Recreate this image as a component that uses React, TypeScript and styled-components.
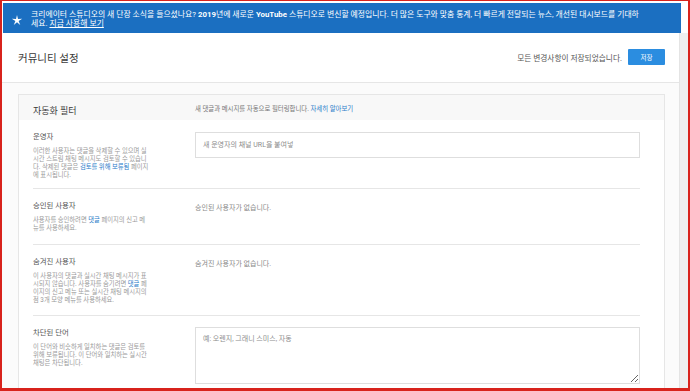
import styled, { createGlobalStyle } from "styled-components";

const GlobalStyle = createGlobalStyle`
   html, body {
      margin: 0;
      padding: 0;
      background: #ffffff;
   }
   body {
      font-family: Roboto, "Noto Sans CJK KR", sans-serif;
   }
   * {
      box-sizing: border-box;
   }
`;

const colors = {
   frame: "#d8231c",
   banner: "#1b6fc1",
   button: "#2b8de0",
   link: "#2a7cc9",
   title: "#3a3a3a",
   label: "#555555",
   muted: "#9a9a9a",
   line: "#e6e6e6",
};

const Frame = styled.div`
   width: 690px;
   height: 391px;
   border: 2px solid ${colors.frame};
   border-top-width: 1px;
   border-bottom-width: 3px;
   display: flex;
   flex-direction: column;
   overflow: hidden;
   background: #ffffff;
`;

const Banner = styled.div`
   display: flex;
   align-items: center;
   margin: 2px 7px 0 1px;
   height: 30px;
   padding: 0 0 0 8px;
   background: ${colors.banner};
   color: #ffffff;
   font-size: 7.85px;
   line-height: 9.5px;
   flex-shrink: 0;
`;

const StarIcon = styled.svg`
   flex-shrink: 0;
   margin-right: 8px;
   margin-top: 4px;
`;

const BannerText = styled.div`
   white-space: nowrap;
   padding-top: 2px;
   b {
      font-weight: 700;
   }
   a {
      color: #ffffff;
      text-decoration: underline;
   }
`;

const Body = styled.div`
   flex: 1;
   display: flex;
   min-height: 0;
`;

const Main = styled.div`
   flex: 1;
   display: flex;
   flex-direction: column;
   background: #fbfbfb;
   min-width: 0;
`;

const ScrollTrack = styled.div`
   width: 9px;
   flex-shrink: 0;
   background: #efefef;
   border-left: 1px solid #e4e4e4;
`;

const Header = styled.div`
   display: flex;
   align-items: center;
   height: 50px;
   padding: 0 14px 0 16px;
   background: #ffffff;
   border-bottom: 1px solid ${colors.line};
   flex-shrink: 0;
`;

const PageTitle = styled.h1`
   margin: 0;
   flex: 1;
   font-size: 10.5px;
   font-weight: 400;
   color: ${colors.title};
`;

const SavedNote = styled.span`
   font-size: 7.7px;
   color: #555555;
   margin-right: 6px;
`;

const SaveButton = styled.button`
   width: 37px;
   height: 16px;
   border: none;
   border-radius: 1px;
   background: ${colors.button};
   color: #ffffff;
   font-family: inherit;
   font-size: 6.5px;
   padding: 0;
   margin-top: -1px;
`;

const Card = styled.section`
   margin: 11px 14px 0 16px;
   background: #ffffff;
   border: 1px solid ${colors.line};
   border-bottom: none;
   flex: 1;
`;

const CardHeader = styled.div`
   display: grid;
   grid-template-columns: 162px 1fr;
   align-items: center;
   height: 25px;
   padding: 2px 24px 0 14px;
   background: #f8f8f8;
`;

const CardTitle = styled.h2`
   margin: 0;
   font-size: 9px;
   font-weight: 400;
   color: ${colors.title};
   padding-top: 3px;
`;

const CardIntro = styled.p`
   margin: 0;
   font-size: 6.4px;
   color: #777777;
`;

const Link = styled.a`
   color: ${colors.link};
   text-decoration: none;
`;

const Row = styled.div<{ $bottom: number }>`
   display: grid;
   grid-template-columns: 162px 1fr;
   margin: 0 24px 0 14px;
   padding: 11px 0 ${(p) => p.$bottom}px;
   border-bottom: 1px solid ${colors.line};
`;

const Label = styled.div`
   font-size: 7.4px;
   line-height: 12px;
   color: ${colors.label};
`;

const Description = styled.p`
   margin: 4px 0 0;
   font-size: 6.3px;
   line-height: 8.1px;
   color: ${colors.muted};
   white-space: nowrap;
`;

const EmptyNote = styled.div`
   padding-top: 2px;
   font-size: 7px;
   line-height: 12px;
   color: #8a8a8a;
`;

const TextInput = styled.input`
   display: block;
   width: 100%;
   height: 26px;
   margin-top: 1px;
   border: 1px solid #dedede;
   padding: 0 7px;
   font-family: inherit;
   font-size: 7px;
   color: #333333;
   background: #ffffff;
   outline: none;
   &::placeholder {
      color: #8c8c8c;
   }
`;

const TextArea = styled.textarea`
   display: block;
   width: 100%;
   height: 57px;
   margin-top: 0;
   border: 1px solid #dedede;
   padding: 5px 7px;
   font-family: inherit;
   font-size: 7px;
   color: #333333;
   background: #ffffff;
   outline: none;
   &::placeholder {
      color: #8c8c8c;
   }
`;

const Star = () => {
   const pts: string[] = [];
   for (let i = 0; i < 10; i++) {
      const r = i % 2 === 0 ? 5.5 : 1.7;
      const a = (Math.PI / 5) * i - Math.PI / 2;
      pts.push(`${(6 + r * Math.cos(a)).toFixed(2)},${(6.5 + r * Math.sin(a)).toFixed(2)}`);
   }
   return (
      <StarIcon width="12" height="12" viewBox="0 0 12 12">
         <polygon points={pts.join(" ")} fill="#ffffff" />
      </StarIcon>
   );
};

const App: React.FC = () => {
   return (
      <>
         <GlobalStyle />
         <Frame>
            <Banner>
               <Star />
               <BannerText>
                  크리에이터 스튜디오의 새 단장 소식을 들으셨나요? <b>2019</b>년에 새로운{" "}
                  <b>YouTube</b> 스튜디오로 변신할 예정입니다. 더 많은 도구와 맞춤 통계, 더
                  빠르게 전달되는 뉴스, 개선된 대시보드를 기대하
                  <br />
                  세요. <a href="#">지금 사용해 보기</a>
               </BannerText>
            </Banner>
            <Body>
               <Main>
                  <Header>
                     <PageTitle>커뮤니티 설정</PageTitle>
                     <SavedNote>모든 변경사항이 저장되었습니다.</SavedNote>
                     <SaveButton>저장</SaveButton>
                  </Header>
                  <Card>
                     <CardHeader>
                        <CardTitle>자동화 필터</CardTitle>
                        <CardIntro>
                           새 댓글과 메시지를 자동으로 필터링합니다.{" "}
                           <Link href="#">자세히 알아보기</Link>
                        </CardIntro>
                     </CardHeader>
                     <Row $bottom={9}>
                        <div>
                           <Label>운영자</Label>
                           <Description>
                              이러한 사용자는 댓글을 삭제할 수 있으며 실<br />
                              시간 스트림 채팅 메시지도 검토할 수 있습니<br />
                              다. 삭제된 댓글은 <Link href="#">검토를 위해 보류됨</Link> 페이지
                              <br />에 표시됩니다.
                           </Description>
                        </div>
                        <div>
                           <TextInput placeholder="새 운영자의 채널 URL을 붙여넣" />
                        </div>
                     </Row>
                     <Row $bottom={11}>
                        <div>
                           <Label>승인된 사용자</Label>
                           <Description>
                              사용자를 승인하려면 <Link href="#">댓글</Link> 페이지의 신고 메
                              <br />
                              뉴를 사용하세요.
                           </Description>
                        </div>
                        <EmptyNote>승인된 사용자가 없습니다.</EmptyNote>
                     </Row>
                     <Row $bottom={11}>
                        <div>
                           <Label>숨겨진 사용자</Label>
                           <Description>
                              이 사용자의 댓글과 실시간 채팅 메시지가 표<br />
                              시되지 않습니다. 사용자를 숨기려면 <Link href="#">댓글</Link> 페
                              <br />
                              이지의 신고 메뉴 또는 실시간 채팅 메시지의
                              <br />점 3개 모양 메뉴를 사용하세요.
                           </Description>
                        </div>
                        <EmptyNote>숨겨진 사용자가 없습니다.</EmptyNote>
                     </Row>
                     <Row $bottom={12}>
                        <div>
                           <Label>차단된 단어</Label>
                           <Description>
                              이 단어와 비슷하게 일치하는 댓글은 검토를
                              <br />
                              위해 보류됩니다. 이 단어와 일치하는 실시간
                              <br />
                              채팅은 차단됩니다.
                           </Description>
                        </div>
                        <div>
                           <TextArea placeholder="예: 오렌지, 그래니 스미스, 자동" />
                        </div>
                     </Row>
                  </Card>
               </Main>
               <ScrollTrack />
            </Body>
         </Frame>
      </>
   );
};

export default App;
